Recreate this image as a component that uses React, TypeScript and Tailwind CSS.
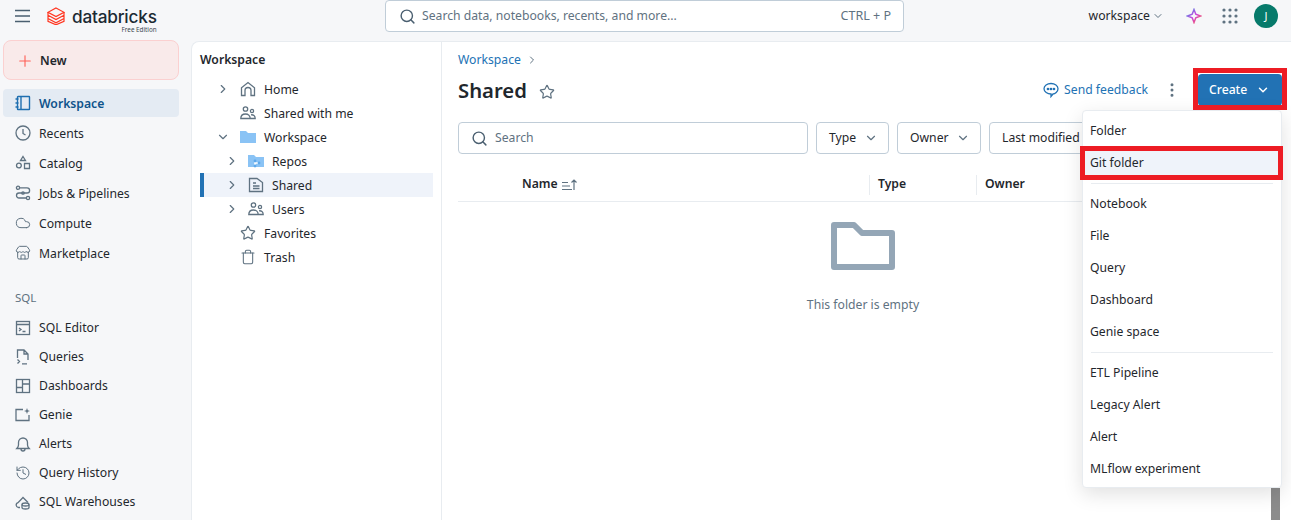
import React from 'react';
import { ChevronDown, ChevronRight, Search, Star, EllipsisVertical, Plus, Trash, Cloud, Store, History } from 'lucide-react';

const slate = '#5f7281';

function Ico({ children, className = 'w-4 h-4' }: { children: React.ReactNode; className?: string }) {
  return (
    <svg viewBox="0 0 16 16" fill="none" stroke={slate} strokeWidth="1.300" className={`${className} shrink-0`}>
      {children}
    </svg>
  );
}

const NotebookIcon = () => (
  <svg viewBox="0 0 16 16" fill="none" stroke="#1f6fb0" strokeWidth="1.400" className="w-4 h-4 shrink-0">
    <rect x="2.500" y="1.500" width="12" height="13" rx="0.500" />
    <path d="M6 1.500v13M0.500 4h3M0.500 8h3M0.500 12h3" />
  </svg>
);
const ClockIcon = () => (
  <Ico><circle cx="8" cy="8" r="7" /><path d="M8 4v4.500l2.500 1.500" /></Ico>
);
const CatalogIcon = () => (
  <Ico><path d="M8 1.500l2.500 4h-5zM1.500 10.500a2.400 2.400 0 1 0 4.800 0a2.400 2.400 0 1 0-4.800 0zM9.500 8.500h5v5h-5z" /></Ico>
);
const JobsIcon = () => (
  <Ico>
    <circle cx="3" cy="2.800" r="1.600" /><circle cx="13" cy="13" r="1.600" /><circle cx="8" cy="8" r="1.200" />
    <path d="M4.600 2.800H12a2.600 2.600 0 0 1 0 5.200H4a2.500 2.500 0 0 0 0 5h7.400" />
  </Ico>
);
const SqlEditorIcon = () => (
  <Ico><rect x="1.500" y="1.500" width="13" height="13" /><path d="M1.500 4.500h13M4 8l2 1.500L4 11M7.500 11.500h3" /></Ico>
);
const QueriesIcon = () => (
  <Ico><path d="M2.500 9V1h6.500l4 4v6M9 1v4h4M2.500 10.500l2 2-2 2M7 14.800h5" /></Ico>
);
const DashboardIcon = () => (
  <Ico><rect x="1.500" y="1.500" width="13" height="13" /><path d="M7.500 1.500v13M7.500 6h7M1.500 9.500h6" /></Ico>
);
const GenieIcon = () => (
  <Ico>
    <path d="M8 2.500H1v11h13V8" />
    <path d="M12 1l.8 2.200L15 4l-2.200.8L12 7l-.8-2.200L9 4l2.200-.8z" fill={slate} stroke="none" />
  </Ico>
);
const BellIcon = () => (
  <Ico><path d="M1.800 12.500c1.200-1.200 1.700-2 1.700-3.500V6.500a4.500 4.500 0 0 1 9 0V9c0 1.500.5 2.300 1.700 3.500zM6 13a2 2 0 0 0 4 0" /></Ico>
);
const WarehouseIcon = () => (
  <Ico>
    <path d="M5 13.500H3.500A2.500 2.500 0 0 1 3 8.600L8 3.500l5 5" />
    <ellipse cx="10.500" cy="10.500" rx="3.500" ry="1.500" />
    <path d="M7 10.500v3c0 .8 1.600 1.500 3.500 1.500s3.500-.7 3.500-1.500v-3" />
  </Ico>
);
const PeopleIcon = () => (
  <Ico>
    <circle cx="5.500" cy="4" r="2.200" /><circle cx="12" cy="6" r="1.600" />
    <path d="M.8 13.500c0-3 2-4.500 4.700-4.500s4.700 1.500 4.700 4.500zM11 9.800c2.400-.3 4.200.8 4.200 3.700h-5" />
  </Ico>
);
const HomeIcon = () => (
  <Ico><path d="M1.500 14.500V6.800L8 1.500l6.500 5.300v7.700h-3.500V9.500a3 3 0 0 0-6 0v5z" /></Ico>
);
const FolderSolid = () => (
  <svg viewBox="0 0 16 16" className="w-4 h-4 shrink-0" fill="#8ac3f5">
    <path d="M0 2h6l2 2h8v10H0z" />
  </svg>
);
const RepoIcon = () => (
  <svg viewBox="0 0 16 16" className="w-4 h-4 shrink-0">
    <path d="M0 2h6l2 2h8v10H0z" fill="#8ac3f5" />
    <path d="M7 8v4M7 10h4" stroke="#fff" strokeWidth="1.600" fill="none" />
    <circle cx="7" cy="8" r="1.400" fill="#5da8ea" /><circle cx="7" cy="13" r="1.400" fill="#5da8ea" /><circle cx="11" cy="10" r="1.400" fill="#5da8ea" />
  </svg>
);
const SharedIcon = () => (
  <Ico><path d="M1.500 1.500h7.500l5.500 4v9h-13zM5 6h3M5 9h6.500M5 11.500h6.500" /></Ico>
);

function NavItem({ icon, label, active, h = 'h-[30px]' }: { icon: React.ReactNode; label: string; active?: boolean; h?: string }) {
  return (
    <div className={`flex items-center gap-2 pl-[12px] rounded text-[12.2px] ${h} ${active ? 'bg-[#e4ebf3] text-[#0e538b] font-semibold' : 'text-[#1f272d]'}`}>
      {icon}
      <span className={h === 'h-[29px]' ? 'pt-px' : 'pt-[2px]'}>{label}</span>
    </div>
  );
}

function TreeRow({ depth, open, icon, label, chevron = true, selected }: { depth: number; open?: boolean; icon: React.ReactNode; label: string; chevron?: boolean; selected?: boolean }) {
  return (
    <div className={`flex items-center h-6 text-[12.2px] text-[#1f272d] border-l-4 ${selected ? 'bg-[#eff3fa] border-[#2272b4]' : 'border-transparent'}`}>
      <div className={depth === 0 ? 'w-[12px]' : 'w-[21px]'} />
      <div className={`${depth === 0 ? 'w-[24px]' : 'w-[23px]'} flex`}>
        {chevron && (open
          ? <ChevronDown className="w-[14px] h-[14px] text-[#5f7281]" />
          : <ChevronRight className="w-[14px] h-[14px] text-[#5f7281]" />)}
      </div>
      <span className="w-[16px] flex justify-center">{icon}</span>
      <span className="ml-[8px] pt-[2px]">{label}</span>
    </div>
  );
}

function FilterButton({ label, w }: { label: string; w: string }) {
  return (
    <div className={`h-8 ${w} shrink-0 flex items-center justify-between pl-[12px] pr-[10px] border border-[#c0cdd8] rounded text-[12.2px] text-[#1f272d] whitespace-nowrap`}>
      {label}
      <ChevronDown className="w-[14px] h-[14px] shrink-0 text-[#5f7281]" />
    </div>
  );
}

function MenuItem({ label }: { label: string }) {
  return <div className="h-8 flex items-center px-[7px] text-[12.2px] text-[#1f272d]">{label}</div>;
}

export default function App() {
  return (
    <div className="w-[1291px] h-[520px] overflow-hidden bg-[#f6f7f9] flex flex-col relative" style={{ fontFamily: '"Noto Sans", sans-serif' }}>
      {/* top bar */}
      <header className="h-[41px] shrink-0 flex items-start">
        <div className="w-[385px] shrink-0 flex items-start">
          <svg viewBox="0 0 16 14" className="w-[16px] h-[14px] ml-[15px] mt-[9px] shrink-0" fill="none" stroke="#4a5f70" strokeWidth="1.300">
            <path d="M0 1.500h15M0 7h15M0 12.500h15" />
          </svg>
          <svg viewBox="0 0 18 18" className="w-[18px] h-[18px] ml-[16px] mt-[7px] shrink-0" fill="none" stroke="#ff3621" strokeWidth="1.200">
            <path d="M9 1l8 4.300-8 4.300-8-4.300z" />
            <path d="M1 8.300l8 4.300 8-4.300M1 11.500l8 4.300 8-4.300M1 5.300v9l8 3.500 8-3.500v-9" />
          </svg>
          <div className="ml-[7px] flex flex-col items-end">
            <span className="text-[17.200px] leading-[22px] mt-[6px] font-medium text-[#1b2a33] tracking-[-0.2px]" style={{ fontFamily: 'Inter, sans-serif' }}>databricks</span>
            <span className="text-[6.300px] leading-[6px] -mt-px text-[#3a4750]">Free Edition</span>
          </div>
        </div>
        <div className="w-[519px] h-[32px] shrink-0 bg-white border border-[#c0cdd8] rounded flex items-center pl-[13px] pr-[12px]">
          <Search className="w-[17px] h-[17px] text-[#4a5f70]" />
          <span className="ml-[6px] text-[12.2px] text-[#5f7281]">Search data, notebooks, recents, and more...</span>
          <span className="ml-auto text-[12.500px] text-[#5f7281]">CTRL + P</span>
        </div>
        <div className="flex-1 flex items-center h-[32px]">
          <span className="ml-auto text-[12.2px] text-[#1f272d]">workspace</span>
          <ChevronDown className="w-[12px] h-[12px] ml-[2px] text-[#5f7281]" />
          <svg viewBox="0 0 16 16" className="w-[16px] h-[16px] ml-[22px]" fill="none" strokeWidth="1.500">
            <defs>
              <linearGradient id="spark" x1="0" y1="0" x2="1" y2="1">
                <stop offset="0" stopColor="#4299e0" />
                <stop offset="0.500" stopColor="#ca42e0" />
                <stop offset="1" stopColor="#ff5f46" />
              </linearGradient>
            </defs>
            <path d="M8 1.500l1.800 4.700 4.700 1.800-4.700 1.800L8 14.500l-1.800-4.700L1.500 8l4.700-1.800z" stroke="url(#spark)" />
          </svg>
          <svg viewBox="0 0 16 16" className="w-[16px] h-[16px] ml-[20px]" fill="#5f7281">
            {[2, 8, 14].flatMap((y) => [2, 8, 14].map((x) => <circle key={`${x}-${y}`} cx={x} cy={y} r="1.600" />))}
          </svg>
          <div className="w-6 h-6 rounded-full bg-[#077a6b] text-white text-[11px] flex items-center justify-center ml-[16px] mr-[13px]">J</div>
        </div>
      </header>

      <div className="flex-1 flex min-h-0">
        {/* left nav */}
        <aside className="w-[191px] shrink-0 pl-[3px] pr-[12px] -mt-px">
          <div className="h-10 pt-[2px] flex items-center gap-[6px] pl-[12px] bg-[#f9eaea] border border-[#fbd0d0] rounded-lg text-[12.2px] font-semibold text-[#1f272d]">
            <Plus className="w-[18px] h-[18px] text-[#ff5f57]" strokeWidth={1.500} />
            New
          </div>
          <div className="mt-[9px]">
            <NavItem icon={<NotebookIcon />} label="Workspace" active h="h-[28px]" />
          </div>
          <div className="mt-px">
            <NavItem icon={<ClockIcon />} label="Recents" />
            <NavItem icon={<CatalogIcon />} label="Catalog" />
            <NavItem icon={<JobsIcon />} label="Jobs & Pipelines" />
            <NavItem icon={<Cloud className="w-4 h-4 text-[#5f7281]" strokeWidth={1.500} />} label="Compute" />
            <NavItem icon={<Store className="w-4 h-4 text-[#5f7281]" strokeWidth={1.500} />} label="Marketplace" />
          </div>
          <div className="mt-[21px] pl-[12px] h-[18px] leading-[18px] text-[11.500px] text-[#5f7281]">SQL</div>
          <div className="mt-[6px]">
            <NavItem icon={<SqlEditorIcon />} label="SQL Editor" h="h-[29px]" />
            <NavItem icon={<QueriesIcon />} label="Queries" h="h-[29px]" />
            <NavItem icon={<DashboardIcon />} label="Dashboards" h="h-[29px]" />
            <NavItem icon={<GenieIcon />} label="Genie" h="h-[29px]" />
            <NavItem icon={<BellIcon />} label="Alerts" h="h-[29px]" />
            <NavItem icon={<History className="w-4 h-4 text-[#5f7281]" strokeWidth={1.500} />} label="Query History" h="h-[29px]" />
            <NavItem icon={<WarehouseIcon />} label="SQL Warehouses" h="h-[29px]" />
          </div>
        </aside>

        {/* white panel */}
        <main className="flex-1 bg-white border-t border-l border-[#e8ecf0] rounded-tl-lg flex min-w-0">
          <section className="w-[250px] shrink-0 border-r border-[#e8ecf0] pl-[8px] pr-[8px]">
            <div className="h-[35px] pt-[2px] flex items-center text-[12.2px] font-semibold text-[#1f272d]">Workspace</div>
            <TreeRow depth={0} icon={<HomeIcon />} label="Home" />
            <TreeRow depth={0} chevron={false} icon={<PeopleIcon />} label="Shared with me" />
            <TreeRow depth={0} open icon={<FolderSolid />} label="Workspace" />
            <TreeRow depth={1} icon={<RepoIcon />} label="Repos" />
            <TreeRow depth={1} selected icon={<SharedIcon />} label="Shared" />
            <TreeRow depth={1} icon={<PeopleIcon />} label="Users" />
            <TreeRow depth={0} chevron={false} icon={<Star className="w-4 h-4 text-[#5f7281]" strokeWidth={1.800} />} label="Favorites" />
            <TreeRow depth={0} chevron={false} icon={<Trash className="w-4 h-4 text-[#5f7281]" strokeWidth={1.600} />} label="Trash" />
          </section>

          <section className="flex-1 min-w-0 pl-[16px] pr-[9px] flex flex-col overflow-hidden">
            <div className="mt-[9px] h-[18px] flex items-center text-[12.2px] text-[#2272b4]">
              Workspace
              <ChevronRight className="w-[12px] h-[12px] ml-[5px] text-[#5f7281]" />
            </div>
            <div className="h-[42px] flex items-center">
              <h1 className="text-[20.300px] font-semibold text-[#1f272d] leading-none">Shared</h1>
              <Star className="w-4 h-4 ml-[12px] mt-[3px] text-[#5f7281]" strokeWidth={1.800} />
              <div className="ml-auto flex items-center">
                <svg viewBox="0 0 16 16" className="w-4 h-4" fill="none" stroke="#2272b4" strokeWidth="1.300">
                  <path d="M8 1.500c3.900 0 7 2.300 7 5.300s-3.100 5.200-5 5.200l-2 2.500V12c-3.500 0-7-2.200-7-5.200S4.100 1.500 8 1.500z" />
                  <circle cx="5" cy="7" r=".7" fill="#2272b4" /><circle cx="8" cy="7" r=".7" fill="#2272b4" /><circle cx="11" cy="7" r=".7" fill="#2272b4" />
                </svg>
                <span className="ml-[5px] text-[12.2px] text-[#2272b4]">Send feedback</span>
                <EllipsisVertical className="w-[18px] h-[18px] ml-[15px] text-[#5f7281]" />
                <div className="w-[84px] h-8 ml-[17px] bg-[#2272b4] text-white text-[12.2px] font-medium flex items-center pl-[11px] rounded-sm">
                  Create
                  <ChevronDown className="w-[14px] h-[14px] ml-[9px]" strokeWidth={2.500} />
                </div>
              </div>
            </div>
            <div className="mt-[11px] flex gap-2">
              <div className="w-[350px] h-8 shrink-0 border border-[#c0cdd8] rounded flex items-center pl-[12px] text-[12.2px] text-[#5f7281]">
                <Search className="w-[17px] h-[17px] text-[#4a5f70] mr-[7px]" />
                Search
              </div>
              <FilterButton label="Type" w="w-[73px]" />
              <FilterButton label="Owner" w="w-[84px]" />
              <FilterButton label="Last modified" w="w-[120px]" />
            </div>
            <div className="mt-[14px] h-[34px] border-b border-[#e8ecf0] flex items-center text-[12.2px] font-semibold text-[#1f272d]">
              <div className="w-[412px] pl-[64px] flex items-center gap-[4px] border-r border-[#e8ecf0] h-[20px]">
                Name
                <svg viewBox="0 0 16 12" className="w-[16px] h-[12px]" fill="none" stroke="#5f7281" strokeWidth="1.200">
                  <path d="M0 3.500h6M0 7h8M0 10.500h10M12 11V1M9.500 3.500L12 1l2.500 2.500" />
                </svg>
              </div>
              <div className="w-[107px] pl-[8px] h-[20px] border-r border-[#e8ecf0] flex items-center">Type</div>
              <div className="pl-[8px]">Owner</div>
            </div>
            <div className="flex flex-col items-center pt-[20px] w-[810px]">
              <svg viewBox="0 0 64 48" className="w-[64px] h-[48px]" fill="none" stroke="#94a6b6" strokeWidth="6">
                <path d="M3 3h20l8 8h30v34H3z" strokeLinejoin="round" />
              </svg>
              <p className="mt-[26px] text-[12.2px] text-[#5f7281]">This folder is empty</p>
            </div>
          </section>
        </main>
      </div>

      {/* scrollbar */}
      <div className="absolute left-[1271px] top-[488px] w-[9px] h-[32px] bg-[#8c8c8c]" />

      {/* create dropdown */}
      <div className="absolute left-[1082px] top-[110px] w-[200px] h-[378px] bg-white border border-[#e8ecf0] rounded shadow-[0_6px_20px_rgba(0,0,0,0.12)] py-[4px]">
        <MenuItem label="Folder" />
        <div className="bg-[#eff3fa]"><MenuItem label="Git folder" /></div>
        <div className="my-[4px] mx-2 h-px bg-[#e8ecf0]" />
        <MenuItem label="Notebook" />
        <MenuItem label="File" />
        <MenuItem label="Query" />
        <MenuItem label="Dashboard" />
        <MenuItem label="Genie space" />
        <div className="my-[4px] mx-2 h-px bg-[#e8ecf0]" />
        <MenuItem label="ETL Pipeline" />
        <MenuItem label="Legacy Alert" />
        <MenuItem label="Alert" />
        <MenuItem label="MLflow experiment" />
      </div>

      {/* red annotation boxes */}
      <div className="absolute left-[1193px] top-[68px] w-[94px] h-[42px] border-[5px] border-[#ed1c24]" />
      <div className="absolute left-[1080px] top-[146px] w-[203px] h-[34px] border-[5px] border-[#ed1c24]" />
    </div>
  );
}
